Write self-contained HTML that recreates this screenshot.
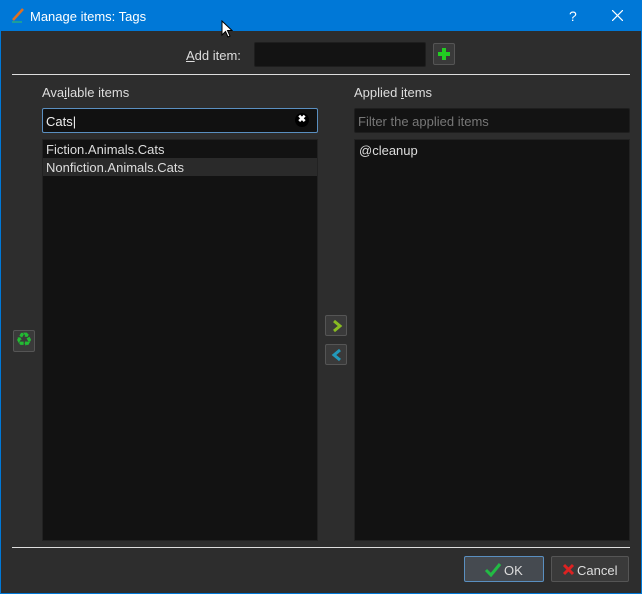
<!DOCTYPE html><html><head><style>
body{margin:0;width:642px;height:594px;background:#2d2d2d;font-family:"Liberation Sans",sans-serif;font-size:13px;color:#ddd;position:relative;overflow:hidden}
.a{position:absolute}
.t{left:0;top:0;width:642px;height:31px;background:#0078d7;color:#fff}
.inp{background:#131313;border:1px solid #1e1e1e;border-radius:2px;box-sizing:border-box}
.btn{background:#3a3a3a;border:1px solid #555;border-radius:2px;box-sizing:border-box}
.list{background:#121212;border:1px solid #222;box-sizing:border-box}
</style></head><body>
<div class="a" style="left:0;top:0;width:1px;height:594px;background:#0078d7"></div>
<div class="a" style="right:0;top:0;width:1px;height:594px;background:#0078d7"></div>
<div class="a" style="left:0;bottom:0;width:642px;height:1px;background:#0078d7"></div>
<div class="a t"><svg class="a" style="left:10px;top:7px" width="16" height="16"><path d="M3 13 L13 2" stroke="#e07020" stroke-width="2.5"/><path d="M2 15 H12" stroke="#2a8" stroke-width="1.5"/></svg>
<span class="a" style="left:30px;top:9px;font-size:13px">Manage items: Tags</span>
<span class="a" style="left:569px;top:8px;font-size:14px">?</span>
<svg class="a" style="left:612px;top:10px" width="11" height="11"><path d="M0 0L11 11M11 0L0 11" stroke="#fff" stroke-width="1.2"/></svg>
<svg class="a" style="left:221px;top:20px" width="12" height="18"><path d="M1 1V15L4.5 11.5L7 17L9 16L6.5 10.5H11Z" fill="#fff" stroke="#000"/></svg></div>
<span class="a" style="left:186px;top:48px"><u>A</u>dd item:</span>
<div class="a inp" style="left:254px;top:42px;width:172px;height:25px"></div>
<div class="a btn" style="left:433px;top:43px;width:22px;height:22px"><svg class="a" style="left:3px;top:3px" width="14" height="14"><path d="M7 1V13M1 7H13" stroke="#2c2" stroke-width="4"/></svg></div>
<div class="a" style="left:12px;top:74px;width:618px;height:1px;background:#ddd"></div>
<span class="a" style="left:42px;top:85px">Ava<u>i</u>lable items</span>
<span class="a" style="left:354px;top:85px">Applied <u>i</u>tems</span>
<div class="a inp" style="left:42px;top:108px;width:276px;height:25px;border-color:#5a8fc0;background:#111"><span class="a" style="left:3px;top:5px;color:#eee">Cats|</span><span class="a" style="left:252px;top:4px;width:14px;height:14px;border-radius:7px;background:#000;color:#fff;font-size:10px;text-align:center;line-height:14px;font-weight:bold">✖</span></div>
<div class="a inp" style="left:354px;top:108px;width:276px;height:25px"><span class="a" style="left:3px;top:5px;color:#777">Filter the applied items</span></div>
<div class="a list" style="left:42px;top:139px;width:276px;height:402px"><div style="height:18px;line-height:19px;padding-left:3px">Fiction.Animals.Cats</div><div style="height:18px;line-height:19px;padding-left:3px;background:#2a2a2a">Nonfiction.Animals.Cats</div></div>
<div class="a list" style="left:354px;top:139px;width:276px;height:402px"><div style="height:20px;line-height:21px;padding-left:4px">@cleanup</div></div>
<div class="a btn" style="left:13px;top:330px;width:22px;height:22px;color:#2b3;text-align:center;line-height:20px;font-size:19px">♻</div>
<div class="a btn" style="left:325px;top:315px;width:22px;height:21px"><svg class="a" style="left:5px;top:3px" width="12" height="14"><path d="M3 2L9 7L3 12" stroke="#8b2" stroke-width="3" fill="none"/></svg></div>
<div class="a btn" style="left:325px;top:344px;width:22px;height:21px"><svg class="a" style="left:5px;top:3px" width="12" height="14"><path d="M9 2L3 7L9 12" stroke="#29b" stroke-width="3" fill="none"/></svg></div>
<div class="a" style="left:12px;top:547px;width:618px;height:1px;background:#ddd"></div>
<div class="a btn" style="left:464px;top:556px;width:80px;height:26px;background:#454a50;border-color:#5a8fc0"><svg class="a" style="left:19px;top:5px" width="18" height="15"><path d="M2 8L7 13L16 2" stroke="#2b4" stroke-width="3" fill="none"/></svg><span class="a" style="left:39px;top:6px">OK</span></div>
<div class="a btn" style="left:551px;top:556px;width:78px;height:26px"><svg class="a" style="left:10px;top:6px" width="13" height="13"><path d="M2 2L11 11M11 2L2 11" stroke="#d22" stroke-width="3"/></svg><span class="a" style="left:25px;top:6px">Cancel</span></div>
</body></html>
